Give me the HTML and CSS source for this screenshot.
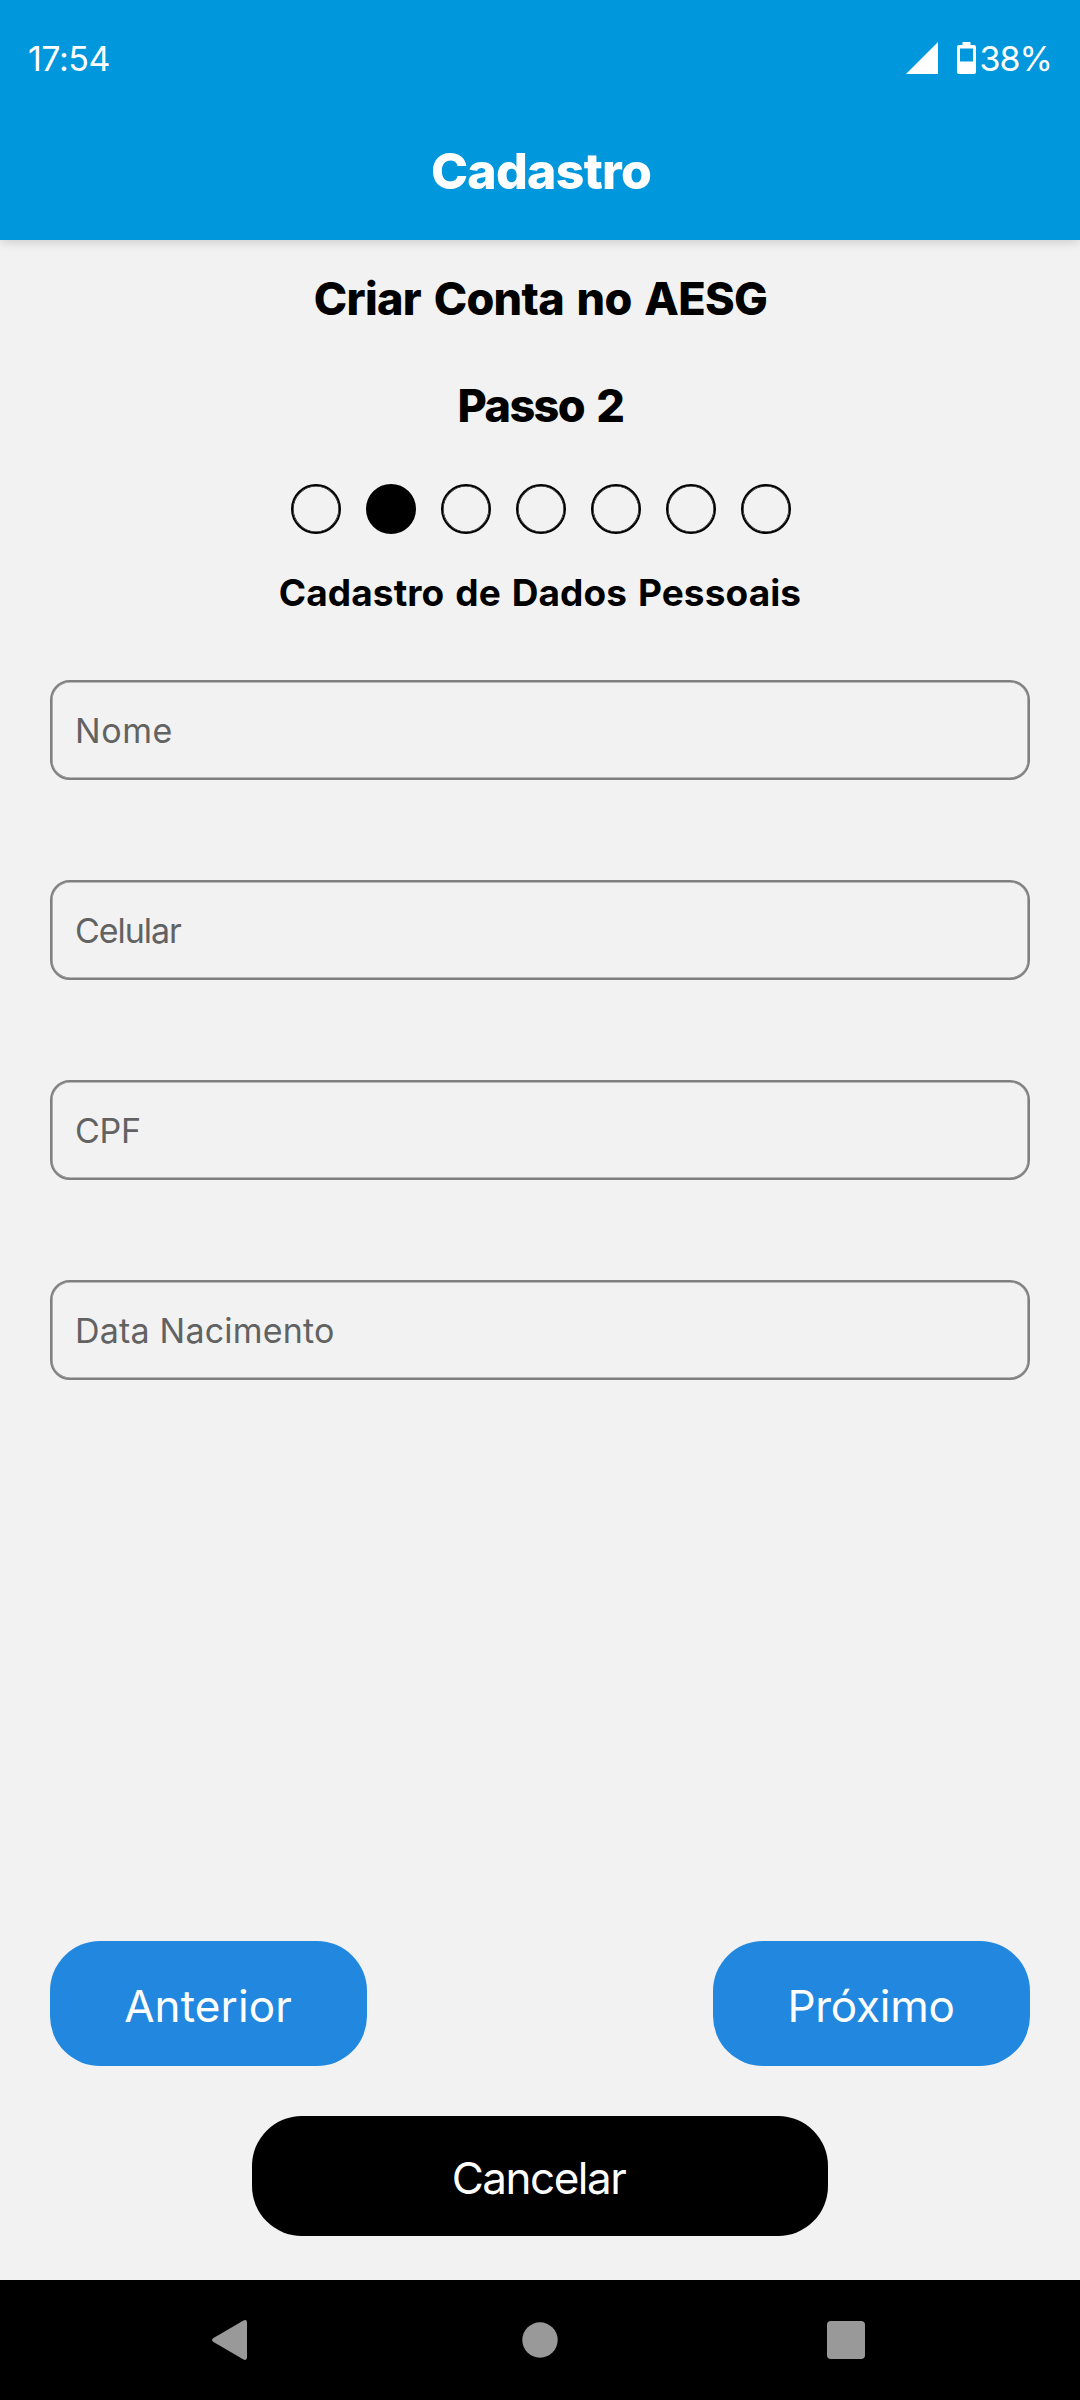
FILE: index.html
```html
<!DOCTYPE html>
<html lang="pt-BR">
<head>
<meta charset="utf-8">
<title>Cadastro</title>
<link rel="stylesheet" href="styles.css">
</head>
<body>
<div class="screen">
  <header class="header">
    <div class="status-bar">
      <span class="clock">17:54</span>
      <div class="status-icons">
        <svg class="signal" width="32" height="32" viewBox="0 0 32 32"><path d="M0 32L32 0V32Z" fill="#fff"/></svg>
        <svg class="battery" width="19" height="32" viewBox="0 0 19 32"><path fill="#fff" fill-rule="evenodd" d="M5.500 0h8v3H17a2 2 0 0 1 2 2v25a2 2 0 0 1-2 2H2a2 2 0 0 1-2-2V5a2 2 0 0 1 2-2h3.500zM3 6.500v13h13v-13z"/></svg>
        <span class="charge">38%</span>
      </div>
    </div>
    <h1 class="title">Cadastro</h1>
  </header>
  <main class="content">
    <h2 class="heading">Criar Conta no AESG</h2>
    <h2 class="heading heading-step">Passo 2</h2>
    <div class="steps">
      <span class="step"></span>
      <span class="step step-active"></span>
      <span class="step"></span>
      <span class="step"></span>
      <span class="step"></span>
      <span class="step"></span>
      <span class="step"></span>
    </div>
    <h3 class="caption">Cadastro de Dados Pessoais</h3>
    <form class="form">
      <input class="field field-name" type="text" placeholder="Nome">
      <input class="field field-phone" type="text" placeholder="Celular">
      <input class="field field-cpf" type="text" placeholder="CPF">
      <input class="field field-birth" type="text" placeholder="Data Nacimento">
    </form>
    <div class="actions">
      <button class="button" type="button">Anterior</button>
      <button class="button button-next" type="button">Próximo</button>
    </div>
    <button class="button button-cancel" type="button">Cancelar</button>
  </main>
  <nav class="nav-bar">
    <svg width="40" height="40" viewBox="0 0 40 40"><path d="M33.500 .4Q37 -.8 37 2.500V37.500Q37 40.800 33.500 39.600L3.500 22Q.5 20 3.500 18Z" fill="#999"/></svg>
    <svg width="40" height="40" viewBox="0 0 40 40"><circle cx="22" cy="20" r="17.700" fill="#999"/></svg>
    <svg width="40" height="40" viewBox="0 0 40 40"><rect x="1" y="1" width="38" height="38" rx="4" fill="#999"/></svg>
  </nav>
</div>
</body>
</html>
```
FILE: styles.css
```css
* {
  box-sizing: border-box;
}

body {
  margin: 0;
  font-family: Inter, "Liberation Sans", sans-serif;
}

.screen {
  display: flex;
  flex-direction: column;
  width: 1080px;
  height: 2400px;
  background: #f2f2f2;
}

.header {
  height: 240px;
  background: #0097dc;
  color: #fff;
  box-shadow: 0 2px 10px rgba(0, 0, 0, 0.16);
}

.status-bar {
  display: flex;
  justify-content: space-between;
  align-items: center;
  height: 117px;
  padding: 0 28px;
  font-size: 34px;
  line-height: 60px;
}

.clock {
  letter-spacing: -0.5px;
}

.status-icons {
  display: flex;
  align-items: center;
}

.signal {
  margin: -2px 19px 0 0;
}

.battery {
  margin: -2px 4px 0 0;
}

.charge {
  letter-spacing: -1px;
}

.title {
  margin: 0;
  padding-left: 2px;
  font-size: 50px;
  font-weight: 800;
  line-height: 109px;
  letter-spacing: -0.75px;
  text-align: center;
}

.content {
  display: flex;
  flex: 1;
  flex-direction: column;
  align-items: center;
  padding: 5px 50px 44px;
}

.heading {
  margin: 0;
  padding-left: 1px;
  font-size: 45px;
  font-weight: 800;
  line-height: 107px;
  letter-spacing: -0.7px;
  word-spacing: 3.5px;
}

.heading-step {
  letter-spacing: -1.6px;
  word-spacing: 4px;
}

.steps {
  display: flex;
  gap: 25px;
  margin-top: 25px;
  padding-left: 2px;
}

.step {
  width: 50px;
  height: 50px;
  border: 2px solid #000;
  border-radius: 50%;
  box-shadow: inset 0 0 0 0.6px #000;
}

.step-active {
  background: #000;
}

.caption {
  margin: 28px 0 57px;
  font-size: 37px;
  font-weight: 700;
  line-height: 61px;
  letter-spacing: 0.1px;
  word-spacing: 2px;
}

.form {
  display: flex;
  flex-direction: column;
  gap: 100px;
  width: 100%;
}

.field {
  width: 100%;
  height: 100px;
  padding: 0 22px 0 23px;
  border: 2px solid #808080;
  border-radius: 20px;
  background: transparent;
  box-shadow: inset 0 0 0 0.6px #808080;
  font: 34px Inter, "Liberation Sans", sans-serif;
}

.field::placeholder {
  color: #626262;
  opacity: 1;
}

.field-name {
  letter-spacing: 0.57px;
}

.field-phone {
  letter-spacing: -1.05px;
}

.field-cpf {
  letter-spacing: -0.28px;
}

.field-birth {
  letter-spacing: 0.2px;
}

.actions {
  display: flex;
  justify-content: space-between;
  width: 100%;
  margin-top: auto;
}

.button {
  width: 317px;
  height: 125px;
  padding: 4px 1px 0 0;
  border: 0;
  border-radius: 50px;
  background: #2288df;
  color: #fff;
  font: 44px Inter, "Liberation Sans", sans-serif;
  letter-spacing: 0.11px;
}

.button-next {
  letter-spacing: -0.26px;
}

.button-cancel {
  width: 576px;
  height: 120px;
  margin-top: 50px;
  padding: 3px 3px 0 0;
  background: #000;
  letter-spacing: -1.5px;
}

.nav-bar {
  display: flex;
  justify-content: space-between;
  align-items: center;
  height: 120px;
  padding: 0 214px 0 210px;
  background: #000;
}
```
